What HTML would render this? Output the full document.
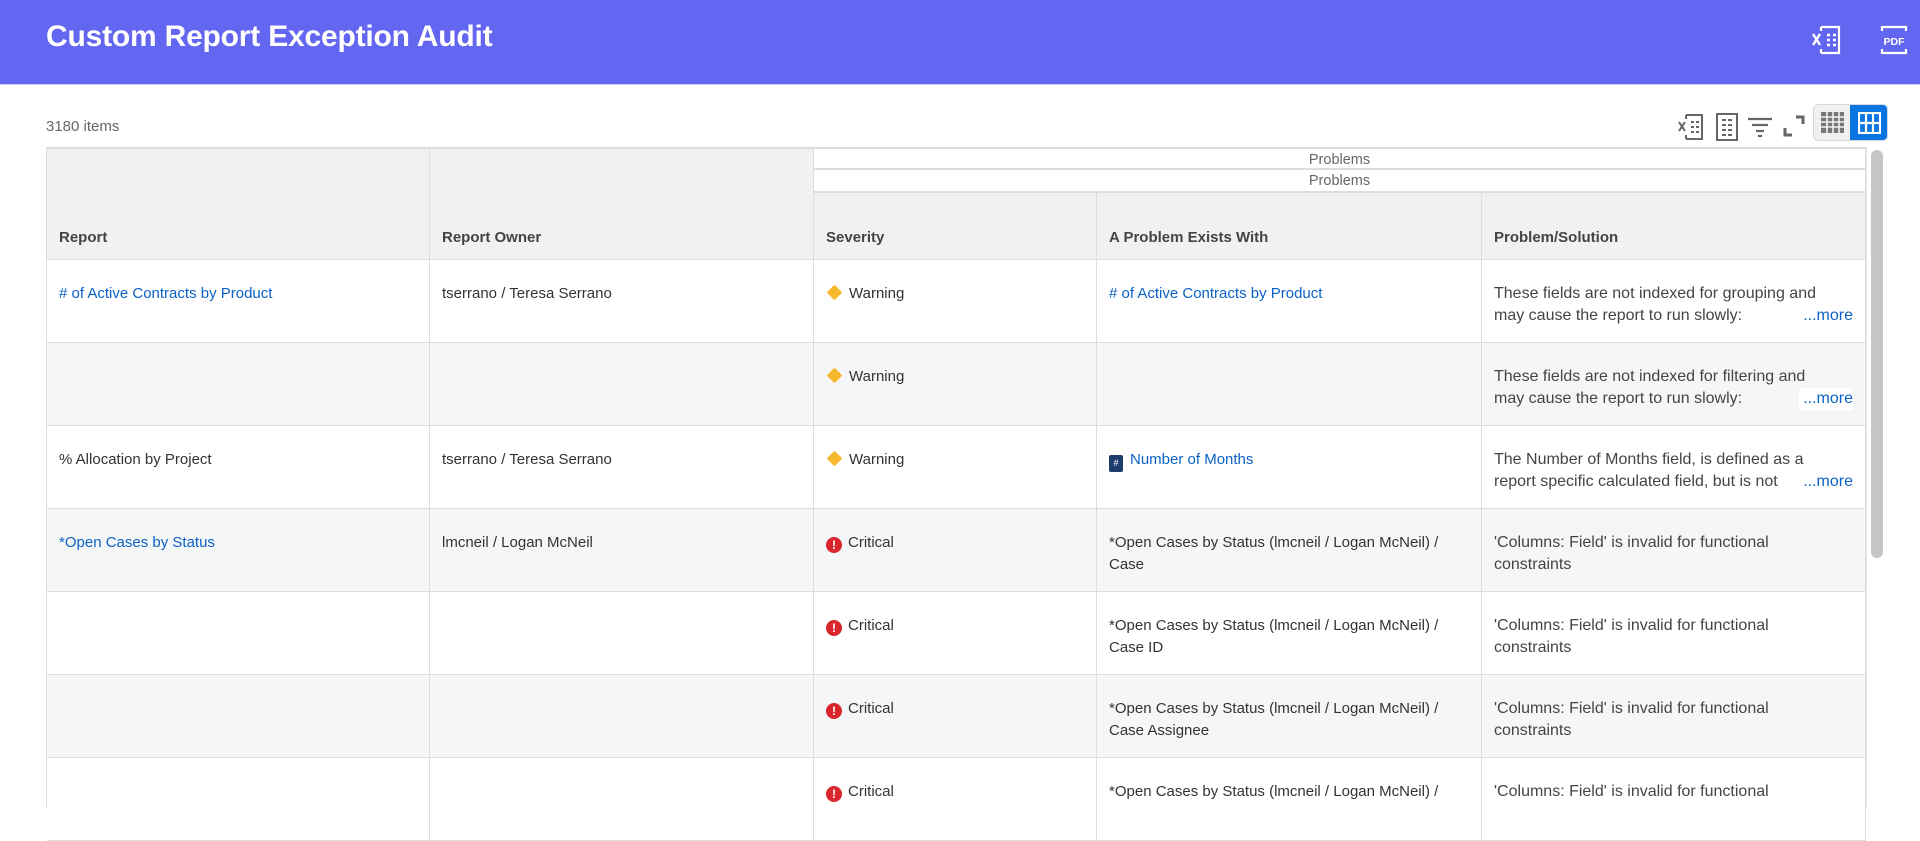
<!DOCTYPE html>
<html><head><meta charset="utf-8"><style>
*{box-sizing:border-box;margin:0;padding:0}
body{width:1920px;height:805px;overflow:hidden;background:#fff;font-family:"Liberation Sans",sans-serif;color:#333;position:relative}
.top{position:absolute;left:0;top:0;width:1920px;height:85px;background:#6366f1;border-bottom:1px solid #c9cbf5}
.top h1{position:absolute;left:46px;top:20px;color:#fff;font-size:30px;font-weight:bold;letter-spacing:-0.2px}
.items{position:absolute;left:46px;top:118px;font-size:15px;color:#666}
.c{position:absolute;border-right:1px solid #dcdde0;border-bottom:1px solid #dcdde0;font-size:15px;line-height:22px;padding:23px 12px 0 12px;overflow:hidden;white-space:nowrap}
.h{background:#f0f1f2;font-weight:bold;color:#444;font-size:15px;padding-top:0}
.h span{position:absolute;bottom:10px;left:12px}
.p{position:absolute;left:814px;width:1052px;height:23px;text-align:center;font-size:14.5px;color:#666;line-height:22px;border-bottom:2px solid #dcdde0;border-right:1px solid #dcdde0;background:#fff}
a{color:#0b62c4;text-decoration:none}
.alt{background:#f5f6f7}
.w{display:inline-block;width:11px;height:11px;background:#f5b82e;transform:rotate(45deg);margin:0 9px 0 3px;border-radius:1px;vertical-align:0px}
.cr{display:inline-block;width:16px;height:16px;border-radius:50%;background:#d8262c;color:#fff;font-size:12px;font-weight:bold;text-align:center;line-height:16px;margin-right:6px;vertical-align:-2px}
.more{position:absolute;right:12px;background:inherit;padding-left:4px}
.num{display:inline-block;width:14px;height:17px;background:#1e3d6e;color:#fff;font-size:9px;text-align:center;line-height:17px;margin-right:7px;vertical-align:-2px;border-radius:2px}
.ps{font-size:16px;line-height:22px;color:#444}
.c1{left:47px;width:383px}.c2{left:430px;width:384px}.c3{left:814px;width:283px}.c4{left:1097px;width:385px}.c5{left:1482px;width:384px}
</style></head><body>
<div class="top"><h1>Custom Report Exception Audit</h1>
<svg style="position:absolute;left:1811px;top:25px" width="32" height="30" viewBox="0 0 32 30" fill="none" stroke="#fff" stroke-width="2.2"><path d="M10 2h18v26H10M10 2v4M10 24v4"/><path d="M2 9l7 11M9 9l-7 11" stroke-width="2.4"/><path d="M16 10h3M22 10h3M16 15h3M22 15h3M16 20h3M22 20h3" stroke-width="2.4"/></svg>
<svg style="position:absolute;left:1880px;top:25px" width="28" height="30" viewBox="0 0 28 30" fill="none" stroke="#fff" stroke-width="2.2"><path d="M2 6V2h24v4M2 24v4h24v-4"/><text x="14" y="20" fill="#fff" stroke="none" font-family="Liberation Sans" font-weight="bold" font-size="10.5" text-anchor="middle">PDF</text></svg>
</div>
<div class="items">3180 items</div>
<svg style="position:absolute;left:1678px;top:113px" width="26" height="28" viewBox="0 0 26 28" fill="none" stroke="#666" stroke-width="2"><path d="M8 2h16v24H8M8 2v4M8 22v4"/><path d="M1 9l6 9M7 9l-6 9"/><path d="M13 9h3M18 9h3M13 14h3M18 14h3M13 19h3M18 19h3"/></svg>
<svg style="position:absolute;left:1716px;top:113px" width="22" height="28" viewBox="0 0 22 28" fill="none" stroke="#666" stroke-width="2"><rect x="1" y="1" width="20" height="26"/><path d="M6 7h4M12 7h4M6 12h4M12 12h4M6 17h4M12 17h4M6 22h4M12 22h4"/></svg>
<svg style="position:absolute;left:1747px;top:117px" width="26" height="20" viewBox="0 0 26 20" fill="none" stroke="#666" stroke-width="2.2"><path d="M1 2h24M5 8h16M9 14h8M11 19h4"/></svg>
<svg style="position:absolute;left:1783px;top:115px" width="22" height="22" viewBox="0 0 22 22" fill="none" stroke="#666" stroke-width="3"><path d="M13 2h7v7M2 13v7h7"/></svg>
<div style="position:absolute;left:1813px;top:104px;width:75px;height:37px;border-radius:5px;background:#eef0f2;border:1px solid #d6d8db;overflow:hidden">
<div style="position:absolute;right:0;top:0;width:37px;height:37px;background:#0875e1"></div>
<svg style="position:absolute;left:7px;top:7px" width="23" height="21" viewBox="0 0 23 21"><rect x="0" y="0" width="23" height="21" fill="#777"/><path d="M0 5h23M0 10h23M0 15h23M6 0v21M12 0v21M18 0v21" stroke="#eef0f2" stroke-width="1.6"/></svg>
<svg style="position:absolute;left:44px;top:7px" width="23" height="22" viewBox="0 0 23 22" fill="none" stroke="#fff" stroke-width="2.2"><rect x="1" y="1" width="21" height="20"/><path d="M1 11h21M8 1v20M15 1v20"/></svg>
</div>
<div style="position:absolute;left:46px;top:147px;width:1820px;height:660px;border-left:1px solid #dcdde0;border-top:2px solid #dcdde0"></div>
<div class="c h c1" style="top:149px;height:111px"><span>Report</span></div>
<div class="c h c2" style="top:149px;height:111px"><span>Report Owner</span></div>
<div class="p" style="top:147px;border-top:2px solid #dcdde0;height:23px">Problems</div>
<div class="p" style="top:170px">Problems</div>
<div class="c h c3" style="top:193px;height:67px"><span>Severity</span></div>
<div class="c h c4" style="top:193px;height:67px"><span>A Problem Exists With</span></div>
<div class="c h c5" style="top:193px;height:67px"><span>Problem/Solution</span></div>

<div class="c c1" style="top:260px;height:83px"><a>#&nbsp;of Active Contracts by Product</a></div>
<div class="c c2" style="top:260px;height:83px">tserrano / Teresa Serrano</div>
<div class="c c3" style="top:260px;height:83px"><span class="w"></span>Warning</div>
<div class="c c4" style="top:260px;height:83px"><a>#&nbsp;of Active Contracts by Product</a></div>
<div class="c ps c5" style="top:260px;height:83px;background:#fff">These fields are not indexed for grouping and<br>may cause the report to run slowly:<span class="more"><a>...more</a></span></div>

<div class="c alt c1" style="top:343px;height:83px"></div>
<div class="c alt c2" style="top:343px;height:83px"></div>
<div class="c alt c3" style="top:343px;height:83px"><span class="w"></span>Warning</div>
<div class="c alt c4" style="top:343px;height:83px"></div>
<div class="c alt ps c5" style="top:343px;height:83px">These fields are not indexed for filtering and<br>may cause the report to run slowly:<span class="more" style="background:#fff"><a>...more</a></span></div>

<div class="c c1" style="top:426px;height:83px">% Allocation by Project</div>
<div class="c c2" style="top:426px;height:83px">tserrano / Teresa Serrano</div>
<div class="c c3" style="top:426px;height:83px"><span class="w"></span>Warning</div>
<div class="c c4" style="top:426px;height:83px"><span class="num">#</span><a>Number of Months</a></div>
<div class="c ps c5" style="top:426px;height:83px;background:#fff">The Number of Months field, is defined as a<br>report specific calculated field, but is not<span class="more" style="background:#fff"><a>...more</a></span></div>

<div class="c alt c1" style="top:509px;height:83px"><a>*Open Cases by Status</a></div>
<div class="c alt c2" style="top:509px;height:83px">lmcneil / Logan McNeil</div>
<div class="c alt c3" style="top:509px;height:83px"><span class="cr">!</span>Critical</div>
<div class="c alt c4" style="top:509px;height:83px">*Open Cases by Status (lmcneil / Logan McNeil) /<br>Case</div>
<div class="c alt ps c5" style="top:509px;height:83px">'Columns: Field' is invalid for functional<br>constraints</div>

<div class="c c1" style="top:592px;height:83px"></div>
<div class="c c2" style="top:592px;height:83px"></div>
<div class="c c3" style="top:592px;height:83px"><span class="cr">!</span>Critical</div>
<div class="c c4" style="top:592px;height:83px">*Open Cases by Status (lmcneil / Logan McNeil) /<br>Case ID</div>
<div class="c ps c5" style="top:592px;height:83px">'Columns: Field' is invalid for functional<br>constraints</div>

<div class="c alt c1" style="top:675px;height:83px"></div>
<div class="c alt c2" style="top:675px;height:83px"></div>
<div class="c alt c3" style="top:675px;height:83px"><span class="cr">!</span>Critical</div>
<div class="c alt c4" style="top:675px;height:83px">*Open Cases by Status (lmcneil / Logan McNeil) /<br>Case Assignee</div>
<div class="c alt ps c5" style="top:675px;height:83px">'Columns: Field' is invalid for functional<br>constraints</div>

<div class="c c1" style="top:758px;height:83px"></div>
<div class="c c2" style="top:758px;height:83px"></div>
<div class="c c3" style="top:758px;height:83px"><span class="cr">!</span>Critical</div>
<div class="c c4" style="top:758px;height:83px">*Open Cases by Status (lmcneil / Logan McNeil) /</div>
<div class="c ps c5" style="top:758px;height:83px">'Columns: Field' is invalid for functional</div>

<div style="position:absolute;left:1866px;top:147px;width:22px;height:660px;background:#fff;border-left:1px solid #e6e6e6"></div>
<div style="position:absolute;left:1871px;top:150px;width:12px;height:408px;border-radius:6px;background:#c6c6c6"></div>
</body></html>
